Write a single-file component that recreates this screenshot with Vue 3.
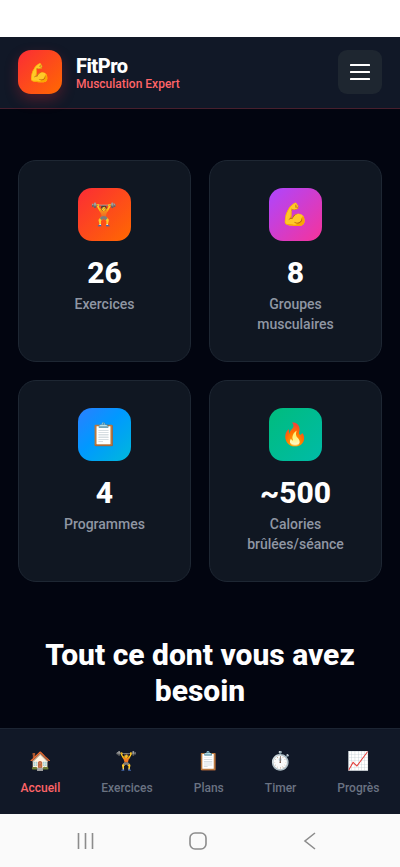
<script setup>
import { ref } from 'vue'

const stats = [
  { icon: '🏋️', value: '26', label: 'Exercices', tone: 'red' },
  { icon: '💪', value: '8', label: 'Groupes musculaires', tone: 'purple' },
  { icon: '📋', value: '4', label: 'Programmes', tone: 'blue' },
  { icon: '🔥', value: '~500', label: 'Calories brûlées/séance', tone: 'green' },
]

const tabs = [
  { id: 'accueil', icon: '🏠', label: 'Accueil' },
  { id: 'exercices', icon: '🏋️', label: 'Exercices' },
  { id: 'plans', icon: '📋', label: 'Plans' },
  { id: 'timer', icon: '⏱️', label: 'Timer' },
  { id: 'progres', icon: '📈', label: 'Progrès' },
]

const current = ref('accueil')
</script>

<template>
  <div class="app">
    <div class="status-bar"></div>

    <header class="header">
      <div class="logo">💪</div>
      <div class="brand">
        <span class="brand-name">FitPro</span>
        <span class="brand-sub">Musculation Expert</span>
      </div>
      <button class="menu-btn" aria-label="Menu">
        <svg viewBox="0 0 20 16" width="20" height="16" fill="#fff">
          <rect y="0" width="20" height="2" rx="0.5" />
          <rect y="7" width="20" height="2" rx="0.5" />
          <rect y="14" width="20" height="2" rx="0.5" />
        </svg>
      </button>
    </header>

    <main class="content">
      <section class="stats">
        <div v-for="s in stats" :key="s.label" class="stat-card">
          <div class="stat-icon" :class="s.tone">{{ s.icon }}</div>
          <div class="stat-value">{{ s.value }}</div>
          <div class="stat-label">{{ s.label }}</div>
        </div>
      </section>

      <h2 class="title">Tout ce dont vous avez besoin</h2>
    </main>

    <nav class="tabs">
      <button
        v-for="t in tabs"
        :key="t.id"
        class="tab"
        :class="{ active: current === t.id }"
        @click="current = t.id"
      >
        <span class="tab-icon">{{ t.icon }}</span>
        <span class="tab-label">{{ t.label }}</span>
      </button>
    </nav>

    <div class="system-bar">
      <button class="sys-btn" aria-label="Applications récentes">
        <svg viewBox="0 0 20 20" width="20" height="20">
          <path d="M2.5 2v16M9.5 2v16M16.5 2v16" />
        </svg>
      </button>
      <button class="sys-btn" aria-label="Écran d'accueil">
        <svg viewBox="0 0 20 20" width="20" height="20">
          <rect x="2" y="2" width="16" height="16" rx="5" />
        </svg>
      </button>
      <button class="sys-btn" aria-label="Retour">
        <svg viewBox="0 0 20 20" width="20" height="20">
          <path d="M15 2L5 10l10 8" />
        </svg>
      </button>
    </div>
  </div>
</template>

<style>
body {
  margin: 0;
  background: #020510;
}
</style>

<style scoped>
.app {
  height: 100vh;
  display: flex;
  flex-direction: column;
  background: #020510;
  color: #fff;
  font-family: Roboto, 'Noto Color Emoji', sans-serif;
}

button {
  border: none;
  padding: 0;
  background: transparent;
  font-family: inherit;
  cursor: pointer;
}

svg { display: block; }

.status-bar {
  flex: none;
  height: 37px;
  background: #fff;
}

.header {
  flex: none;
  display: flex;
  align-items: center;
  gap: 14px;
  padding: 13px 18px 14px;
  background: #111827;
  border-bottom: 1px solid #471f2d;
  z-index: 1;
}

.logo {
  width: 44px;
  height: 44px;
  display: flex;
  align-items: center;
  justify-content: center;
  border-radius: 13px;
  background: linear-gradient(135deg, #fb2c36, #ff6900);
  box-shadow: 0 6px 14px rgba(251, 44, 54, 0.25);
  font-size: 18px;
}

.brand {
  flex: 1;
  display: flex;
  flex-direction: column;
  padding-top: 4px;
}

.brand-name {
  font-size: 20px;
  line-height: 20px;
  font-weight: 800;
  letter-spacing: -0.5px;
}

.brand-sub {
  font-size: 12px;
  line-height: 16px;
  font-weight: 500;
  color: #ff6467;
}

.menu-btn {
  width: 44px;
  height: 44px;
  display: flex;
  align-items: center;
  justify-content: center;
  border-radius: 9px;
  background: #1e2630;
}

.content {
  flex: 1;
  min-height: 0;
  overflow-y: auto;
  scrollbar-width: none;
  padding: 51px 18px 0;
}

.stats {
  display: grid;
  grid-template-columns: 1fr 1fr;
  gap: 18px;
}

.stat-card {
  display: flex;
  flex-direction: column;
  align-items: center;
  padding: 27px;
  background: #101722;
  border: 1px solid #1e2733;
  border-radius: 18px;
  text-align: center;
}

.stat-icon {
  width: 53px;
  height: 53px;
  display: flex;
  align-items: center;
  justify-content: center;
  border-radius: 14px;
  margin-bottom: 14px;
  font-size: 22px;
}

.stat-icon.red { background: linear-gradient(135deg, #fb2c36, #ff6900); }
.stat-icon.purple { background: linear-gradient(135deg, #ad46ff, #f6339a); }
.stat-icon.blue { background: linear-gradient(135deg, #2b7fff, #0099ff 45%, #00b8db); }
.stat-icon.green { background: linear-gradient(135deg, #00bc7d, #00bba7); }

.stat-value {
  font-size: 30px;
  line-height: 36px;
  font-weight: 800;
  margin-bottom: 3px;
}

.stat-label {
  font-size: 14px;
  line-height: 20px;
  font-weight: 500;
  color: #8f96a3;
}

.title {
  margin: 55px 0 0;
  font-size: 30px;
  line-height: 36px;
  font-weight: 800;
  text-align: center;
}

.tabs {
  flex: none;
  display: flex;
  justify-content: space-around;
  padding: 18px 0;
  background: #111827;
  border-top: 1px solid #1c2533;
}

.tab {
  display: flex;
  flex-direction: column;
  align-items: center;
  gap: 5px;
  color: #6a7282;
}

.tab.active { color: #ff6467; }

.tab-icon {
  font-size: 18px;
  line-height: 28px;
}

.tab-label {
  font-size: 12px;
  line-height: 16px;
  font-weight: 500;
}

.system-bar {
  flex: none;
  height: 53px;
  display: flex;
  align-items: center;
  justify-content: center;
  gap: 92px;
  padding-right: 4px;
  background: #fafafa;
}

.sys-btn svg {
  fill: none;
  stroke: #8c8c8c;
  stroke-width: 1.6;
}
</style>
